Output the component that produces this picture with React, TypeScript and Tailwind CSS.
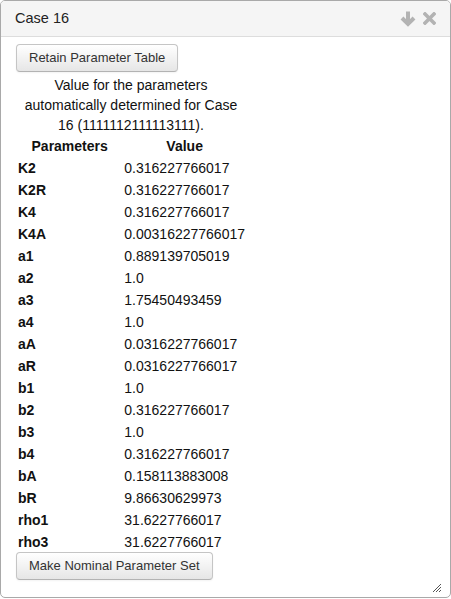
import React from "react";

type Row = { name: string; value: string };

const rows: Row[] = [
  { name: "K2", value: "0.316227766017" },
  { name: "K2R", value: "0.316227766017" },
  { name: "K4", value: "0.316227766017" },
  { name: "K4A", value: "0.00316227766017" },
  { name: "a1", value: "0.889139705019" },
  { name: "a2", value: "1.0" },
  { name: "a3", value: "1.75450493459" },
  { name: "a4", value: "1.0" },
  { name: "aA", value: "0.0316227766017" },
  { name: "aR", value: "0.0316227766017" },
  { name: "b1", value: "1.0" },
  { name: "b2", value: "0.316227766017" },
  { name: "b3", value: "1.0" },
  { name: "b4", value: "0.316227766017" },
  { name: "bA", value: "0.158113883008" },
  { name: "bR", value: "9.86630629973" },
  { name: "rho1", value: "31.6227766017" },
  { name: "rho3", value: "31.6227766017" },
];

function Btn({ children }: { children: React.ReactNode }) {
  return (
    <button className="h-[28px] px-[12px] rounded-[4px] border border-[#c5c5c5] border-b-[#b3b3b3] bg-gradient-to-b from-white to-[#e6e6e6] text-[13px] leading-[18px] text-[#333] shadow-[inset_0_1px_0_rgba(255,255,255,0.2),0_1px_2px_rgba(0,0,0,0.05)]">
      {children}
    </button>
  );
}

export default function App() {
  return (
    <div
      className="w-[451px] h-[599px] bg-white"
      style={{ fontFamily: '"Liberation Sans", Arial, sans-serif' }}
    >
      <div className="w-full h-[598px] border border-[#a9a9a9] rounded-[5px] flex flex-col overflow-hidden">
        {/* Header */}
        <div className="h-[36px] shrink-0 bg-[#f5f5f5] border-b border-[#dddddd] flex items-center justify-between pl-[14px] pr-[14px]">
          <span className="text-[14.5px] text-[#222]">Case 16</span>
          <div className="flex items-center gap-[7px] text-[#b3b3b3]">
            <svg width="16" height="17" viewBox="0 0 16 17">
              <path d="M8 1.5V14" stroke="currentColor" strokeWidth="4" />
              <path d="M2 8L8 14L14 8" stroke="currentColor" strokeWidth="4" fill="none" />
            </svg>
            <svg width="13" height="13" viewBox="0 0 13 13">
              <path d="M2 2L11 11M11 2L2 11" stroke="currentColor" strokeWidth="3.6" strokeLinecap="square" />
            </svg>
          </div>
        </div>

        {/* Body */}
        <div className="relative flex-1 pt-[7px] pl-[15px] text-[#111]">
          <Btn>Retain Parameter Table</Btn>
          <p className="w-[230px] text-center text-[14px] leading-[20px] mt-[3px]">
            Value for the parameters automatically determined for Case 16 (1111112111113111).
          </p>
          <table className="w-[230px] text-[14px] border-collapse">
            <thead>
              <tr className="h-[22px]">
                <th className="w-[108px] px-[2px] font-bold text-center">Parameters</th>
                <th className="px-[1px] font-bold text-center">Value</th>
              </tr>
            </thead>
            <tbody>
              {rows.map((r) => (
                <tr key={r.name} className="h-[22px]">
                  <td className="px-[2px] font-bold">{r.name}</td>
                  <td className="px-[1px]">{r.value}</td>
                </tr>
              ))}
            </tbody>
          </table>
          <div className="-mt-[1px]">
            <Btn>Make Nominal Parameter Set</Btn>
          </div>
          <svg className="absolute right-[8px] bottom-[4px]" width="10" height="10" viewBox="0 0 10 10">
            <path d="M9 1L1 9M9 4L4 9M9 7L7 9" stroke="#555" strokeWidth="1" />
          </svg>
        </div>
      </div>
    </div>
  );
}
